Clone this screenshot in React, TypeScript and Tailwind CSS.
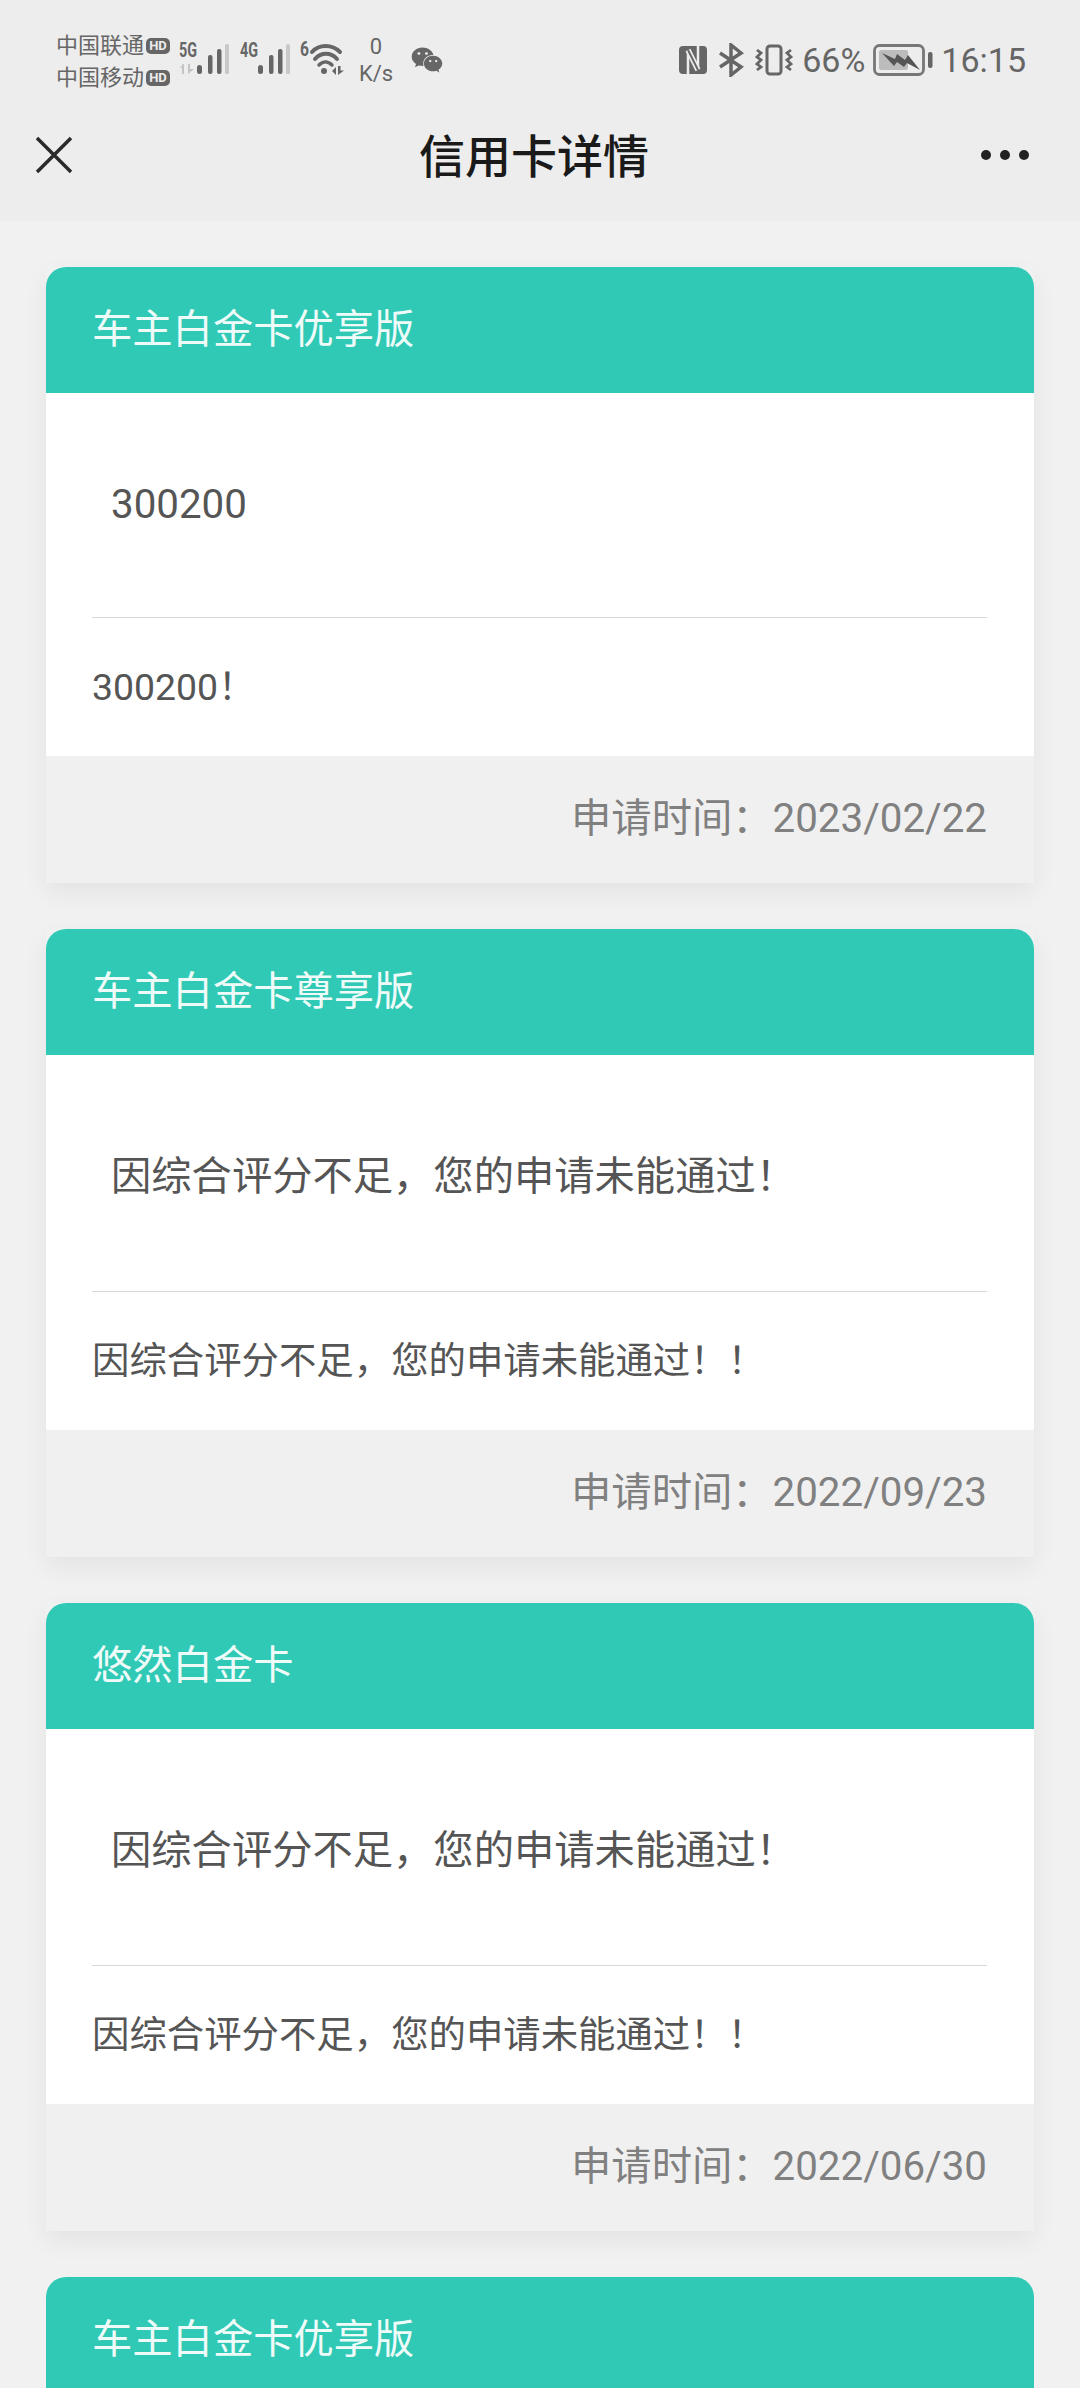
import { FaWeixin } from "react-icons/fa";

const font = { fontFamily: 'Roboto, "Noto Sans CJK SC", sans-serif' };

const cards = [
    { title: "车主白金卡优享版", message: "300200", detail: "300200！", date: "2023/02/22" },
    {
        title: "车主白金卡尊享版",
        message: "因综合评分不足，您的申请未能通过！",
        detail: "因综合评分不足，您的申请未能通过！！",
        date: "2022/09/23",
    },
    {
        title: "悠然白金卡",
        message: "因综合评分不足，您的申请未能通过！",
        detail: "因综合评分不足，您的申请未能通过！！",
        date: "2022/06/30",
    },
];

function HdBadge() {
    return (
        <span className="flex h-[16px] w-[24px] items-center justify-center rounded-[5px] bg-[#666] text-[13px] font-bold leading-none text-[#ededed]">
            HD
        </span>
    );
}

function Signal({ label, arrows }: { label: string; arrows?: boolean }) {
    return (
        <svg width="51" height="44" viewBox="0 -4 51 44">
            <text x="0" y="15" fontSize="20" fontWeight="700" fill="#666" fontFamily="Roboto" textLength="18" lengthAdjust="spacingAndGlyphs">
                {label}
            </text>
            {arrows && <path d="M4 22l-3 4h2v6h2V22zM9 22v10l6-5-4 0v-5z" fill="#c4c4c4" />}
            <rect x="18" y="23" width="5" height="9" rx="2.500" fill="#666" />
            <rect x="29" y="13" width="4.500" height="19" rx="2" fill="#666" />
            <rect x="38" y="7" width="4.500" height="25" rx="2" fill="#666" />
            <rect x="46" y="2" width="4" height="30" rx="1.500" fill="#c8c8c8" />
        </svg>
    );
}

function Wifi() {
    return (
        <svg width="44" height="44" viewBox="0 -4 44 44" fill="none">
            <text x="0" y="14" fontSize="20" fontWeight="700" fill="#666" fontFamily="Roboto" textLength="9" lengthAdjust="spacingAndGlyphs">6</text>
            <path d="M12 10C19 2 32 2 40 10" stroke="#666" strokeWidth="4" strokeLinecap="round" />
            <path d="M15 17C21 10 31 10 37 17" stroke="#666" strokeWidth="4" strokeLinecap="round" />
            <path d="M19 23C23 19 28 19 32 23" stroke="#666" strokeWidth="3.500" strokeLinecap="round" />
            <circle cx="24" cy="29" r="3" fill="#666" />
            <path d="M32 29l4-4v8zM38 24v9l6-4.500h-3.500V24z" fill="#666" />
        </svg>
    );
}

function Nfc() {
    return (
        <svg width="28" height="28" viewBox="0 0 28 28">
            <rect width="28" height="28" rx="4" fill="#666" />
            <path d="M9 5v23M19 0v23" stroke="#ededed" strokeWidth="2.500" />
            <path d="M9 4l10 20" stroke="#ededed" strokeWidth="5.500" />
            <path d="M9 4l10 20" stroke="#666" strokeWidth="2" />
        </svg>
    );
}

function Bluetooth() {
    return (
        <svg width="26" height="34" viewBox="0 0 26 34" fill="none" stroke="#666" strokeWidth="3.500">
            <path d="M2 10l21 14-10 8V2l10 8L2 24" />
        </svg>
    );
}

function Vibrate() {
    return (
        <svg width="38" height="32" viewBox="0 0 38 32" fill="none" stroke="#666">
            <rect x="12" y="2" width="14" height="28" rx="3" strokeWidth="3" />
            <path d="M2 6l4 3-4 4 4 3-4 4 4 3-4 3" strokeWidth="2.800" />
            <path d="M36 6l-4 3 4 4-4 3 4 4-4 3 4 3" strokeWidth="2.800" />
        </svg>
    );
}

function Battery() {
    return (
        <svg width="60" height="32" viewBox="0 0 60 32" fill="none">
            <rect x="1.500" y="1.500" width="49" height="29" rx="5" stroke="#777" strokeWidth="2.800" />
            <rect x="6" y="6" width="29" height="20" rx="2" fill="#bcbcbc" />
            <path d="M9 9l13 6 2-5 8 6 3-5 12 15-13-7-3 4-7-5-3 4z" fill="#555" />
            <rect x="55" y="8" width="4.500" height="16" rx="2" fill="#666" />
        </svg>
    );
}

function StatusBar() {
    return (
        <div className="flex h-[89px] items-center justify-between pl-[56px] pr-[54px] pt-[31px] text-[#666]">
            <div className="flex items-center">
                <div className="mt-[3px] flex w-[114px] flex-col gap-[10px] text-[22px] leading-[22px]">
                    <div className="flex items-center justify-between"><span>中国联通</span><HdBadge /></div>
                    <div className="flex items-center justify-between"><span>中国移动</span><HdBadge /></div>
                </div>
                <div className="ml-[9px]"><Signal label="5G" arrows /></div>
                <div className="ml-[10px]"><Signal label="4G" /></div>
                <div className="ml-[9px]"><Wifi /></div>
                <div className="ml-[14px] flex w-[36px] flex-col items-center text-[22px] leading-[27px]">
                    <span>0</span>
                    <span>K/s</span>
                </div>
                <FaWeixin className="ml-[17px] h-[32px] w-[32px]" />
            </div>
            <div className="flex items-center">
                <Nfc />
                <div className="ml-[11px]"><Bluetooth /></div>
                <div className="ml-[11px]"><Vibrate /></div>
                <span className="ml-[9px] text-[34px] leading-none">66%</span>
                <div className="ml-[8px]"><Battery /></div>
                <span className="ml-[8px] text-[34px] leading-none">16:15</span>
            </div>
        </div>
    );
}

function NavBar() {
    return (
        <div className="relative flex h-[132px] items-center justify-between pl-[35px] pr-[51px]">
            <svg width="38" height="38" viewBox="0 0 38 38" stroke="#2a2a2a" strokeWidth="3.500">
                <path d="M2 2l34 34M36 2L2 36" />
            </svg>
            <h1 className="absolute inset-x-0 pr-[12px] pt-[4px] text-center text-[46px] font-medium text-[#1a1a1a]">信用卡详情</h1>
            <div className="flex gap-[9px]">
                <span className="h-[10px] w-[10px] rounded-full bg-[#222]" />
                <span className="h-[10px] w-[10px] rounded-full bg-[#222]" />
                <span className="h-[10px] w-[10px] rounded-full bg-[#222]" />
            </div>
        </div>
    );
}

function CardHeader({ title }: { title: string }) {
    return (
        <div className="flex h-[126px] items-center rounded-t-[20px] bg-[#30c9b5] pl-[46px] text-[40.300px] text-[#eefbf9]">
            {title}
        </div>
    );
}

function Card({ title, message, detail, date }: (typeof cards)[number]) {
    return (
        <section className="shadow-[0_10px_24px_rgba(0,0,0,0.06)]">
            <CardHeader title={title} />
            <div className="bg-white pl-[46px] pr-[47px]">
                <p className="pb-[89px] pl-[19px] pt-[88px] text-[40.300px] leading-[normal] text-[#555]">{message}</p>
                <div className="h-px bg-[#d8d8d8]" />
                <p className="flex h-[138px] items-center pb-[7px] text-[37.400px] leading-[normal] text-[#555]">{detail}</p>
            </div>
            <div className="flex h-[127px] items-center justify-end bg-[#f0f0f0] pr-[47px] text-[40.300px] text-[#808080]">
                申请时间：{date}
            </div>
        </section>
    );
}

export default function App() {
    return (
        <div className="h-[2388px] overflow-hidden bg-[#f1f1f1]" style={font}>
            <header className="bg-[#ededed]">
                <StatusBar />
                <NavBar />
            </header>
            <main className="flex flex-col gap-[46px] px-[46px] pt-[46px]">
                {cards.map((card) => (
                    <Card key={card.date} {...card} />
                ))}
                <section>
                    <CardHeader title="车主白金卡优享版" />
                </section>
            </main>
        </div>
    );
}
